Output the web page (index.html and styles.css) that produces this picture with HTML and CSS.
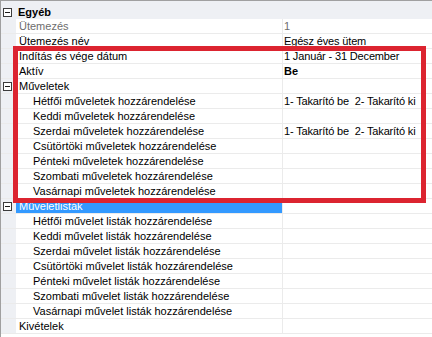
FILE: index.html
```html
<!DOCTYPE html>
<html lang="hu">
<head>
    <meta charset="UTF-8" />
    <meta name="viewport" content="width=device-width, initial-scale=1.0" />
    <title>Tulajdonságok</title>
    <link rel="stylesheet" href="styles.css">
</head>
<body>
    <div class="property-grid">
        <div class="row category">
            <span class="margin"><i class="toggle"></i></span>
            <span class="name">Egyéb</span>
            <span class="value"></span>
        </div>
        <div class="row readonly">
            <span class="margin"></span>
            <span class="name">Ütemezés</span>
            <span class="value">1</span>
        </div>
        <div class="row">
            <span class="margin"></span>
            <span class="name">Ütemezés név</span>
            <span class="value">Egész éves ütem</span>
        </div>
        <div class="row">
            <span class="margin"></span>
            <span class="name">Indítás és vége dátum</span>
            <span class="value">1 Január - 31 December</span>
        </div>
        <div class="row">
            <span class="margin"></span>
            <span class="name">Aktív</span>
            <span class="value bold">Be</span>
        </div>
        <div class="row">
            <span class="margin"><i class="toggle"></i></span>
            <span class="name">Műveletek</span>
            <span class="value"></span>
        </div>
        <div class="row sub">
            <span class="margin"></span>
            <span class="name">Hétfői műveletek hozzárendelése</span>
            <span class="value">1- Takarító be  2- Takarító ki</span>
        </div>
        <div class="row sub">
            <span class="margin"></span>
            <span class="name">Keddi műveletek hozzárendelése</span>
            <span class="value"></span>
        </div>
        <div class="row sub">
            <span class="margin"></span>
            <span class="name">Szerdai műveletek hozzárendelése</span>
            <span class="value">1- Takarító be  2- Takarító ki</span>
        </div>
        <div class="row sub">
            <span class="margin"></span>
            <span class="name">Csütörtöki műveletek hozzárendelése</span>
            <span class="value"></span>
        </div>
        <div class="row sub">
            <span class="margin"></span>
            <span class="name">Pénteki műveletek hozzárendelése</span>
            <span class="value"></span>
        </div>
        <div class="row sub">
            <span class="margin"></span>
            <span class="name">Szombati műveletek hozzárendelése</span>
            <span class="value"></span>
        </div>
        <div class="row sub">
            <span class="margin"></span>
            <span class="name">Vasárnapi műveletek hozzárendelése</span>
            <span class="value"></span>
        </div>
        <div class="row selected">
            <span class="margin"><i class="toggle"></i></span>
            <span class="name">Műveletlisták</span>
            <span class="value"></span>
        </div>
        <div class="row sub">
            <span class="margin"></span>
            <span class="name">Hétfői művelet listák hozzárendelése</span>
            <span class="value"></span>
        </div>
        <div class="row sub">
            <span class="margin"></span>
            <span class="name">Keddi művelet listák hozzárendelése</span>
            <span class="value"></span>
        </div>
        <div class="row sub">
            <span class="margin"></span>
            <span class="name">Szerdai művelet listák hozzárendelése</span>
            <span class="value"></span>
        </div>
        <div class="row sub">
            <span class="margin"></span>
            <span class="name">Csütörtöki művelet listák hozzárendelése</span>
            <span class="value"></span>
        </div>
        <div class="row sub">
            <span class="margin"></span>
            <span class="name">Pénteki művelet listák hozzárendelése</span>
            <span class="value"></span>
        </div>
        <div class="row sub">
            <span class="margin"></span>
            <span class="name">Szombati művelet listák hozzárendelése</span>
            <span class="value"></span>
        </div>
        <div class="row sub">
            <span class="margin"></span>
            <span class="name">Vasárnapi művelet listák hozzárendelése</span>
            <span class="value"></span>
        </div>
        <div class="row">
            <span class="margin"></span>
            <span class="name">Kivételek</span>
            <span class="value"></span>
        </div>

        <!-- kiemelő keret -->
        <div class="highlight-box"></div>
    </div>
</body>
</html>
```

FILE: styles.css
```css
:root {
    --line-color: #eef0f4;
    --grid-line: #ebebeb;
    --border-color: #a0a0a0;
    --select-color: #3399ff;
    --mark-color: #dc2430;
}

body {
    margin: 0;
    padding: 0;
    background: white;
    font-family: 'Liberation Sans', Arial, sans-serif;
    font-size: 11px;
    color: black;
}

.property-grid {
    position: relative;
    border-top: 1px solid var(--border-color);
    border-left: 1px solid var(--border-color);
    height: 336px;
    overflow: hidden;
}

.row {
    display: grid;
    grid-template-columns: 15px 267px 1fr;
    height: 14px;
    line-height: 14px;
    border-bottom: 1px solid var(--grid-line);
    white-space: pre;
}

.margin {
    background-color: var(--line-color);
    display: flex;
    align-items: center;
}

.name {
    padding-left: 3px;
    border-right: 1px solid var(--grid-line);
    overflow: hidden;
}

.value {
    padding-left: 1px;
    overflow: hidden;
}

.value:not(.bold) {
    letter-spacing: -0.15px;
}

.bold {
    font-weight: bold;
}

.sub .name {
    padding-left: 17px;
}

.readonly .name,
.readonly .value {
    color: #6d6d6d;
}

.category {
    height: 17px;
    line-height: 22px;
    background-color: var(--line-color);
    border-bottom-color: var(--line-color);
}

.category .name {
    padding-left: 2px;
    font-weight: bold;
    border-right: none;
}

.selected .name {
    background-color: var(--select-color);
    color: white;
}

.toggle {
    display: block;
    position: relative;
    width: 7px;
    height: 7px;
    margin-left: 2px;
    border: 1px solid #3c3c3c;
    background: white;
}

.toggle::after {
    content: "";
    position: absolute;
    left: 1px;
    top: 3px;
    width: 5px;
    height: 1px;
    background: #1a1a1a;
}

.category .toggle {
    margin-top: 5px;
}

/* piros keret a kiemelt részen */
.highlight-box {
    position: absolute;
    left: 12px;
    top: 45px;
    width: 403px;
    height: 147px;
    border: 5px solid var(--mark-color);
    pointer-events: none;
}
```
